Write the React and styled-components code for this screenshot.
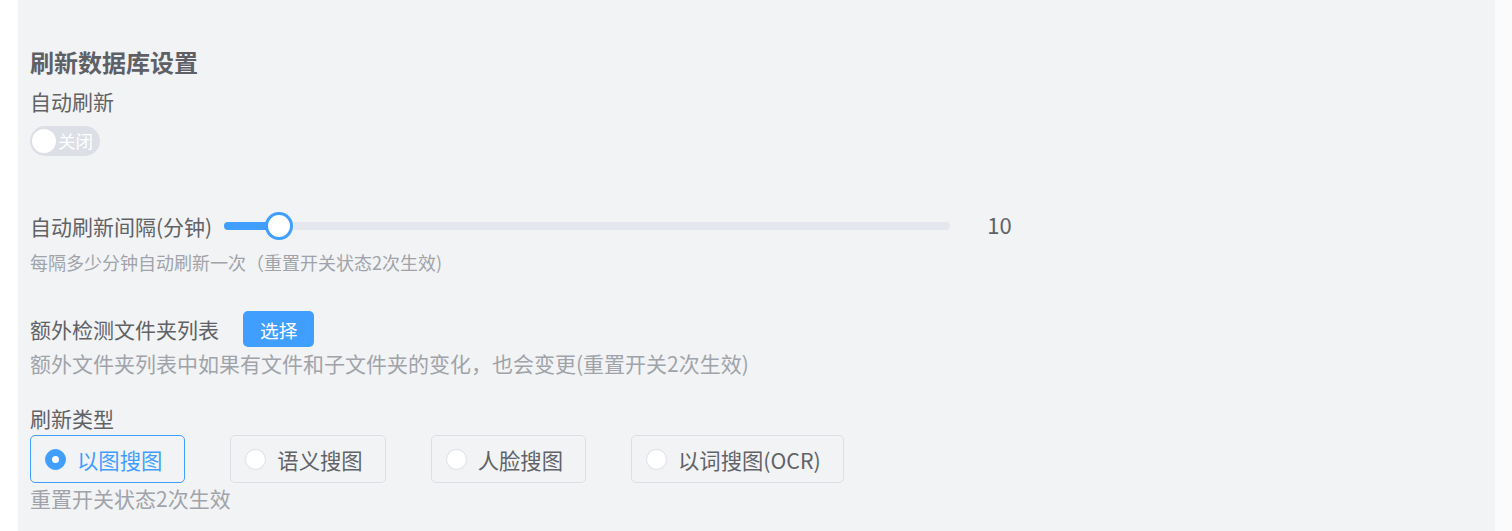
import React, { useState } from "react";
import styled, { createGlobalStyle } from "styled-components";

const GlobalStyle = createGlobalStyle`
  html, body {
    margin: 0;
    padding: 0;
    background: #ffffff;
  }
  body {
    font-family: "Noto Sans CJK SC", "Noto Sans", sans-serif;
    color: #606266;
  }
`;

const Shell = styled.div`
  display: flex;
  min-height: 100vh;
`;

const Gutter = styled.div`
  width: 18px;
  flex-shrink: 0;
  background: #ffffff;
`;

const Scrollbar = styled.div`
  width: 17px;
  flex-shrink: 0;
  background: #fbfbfb;
`;

const Panel = styled.main`
  flex: 1;
  background: #f2f3f5;
  padding: 46px 12px 0 12px;
  display: flex;
  flex-direction: column;
  align-items: flex-start;
`;

const Title = styled.h2`
  margin: 0;
  font-size: 24px;
  line-height: 32px;
  font-weight: 700;
  color: #5e6066;
`;

const Label = styled.div`
  font-size: 21px;
  line-height: ${(p) => p.$lh || 32}px;
  margin-top: ${(p) => p.$mt || 0}px;
  color: #606266;
  white-space: nowrap;
`;

const Hint = styled.div`
  font-size: ${(p) => p.$size || 21}px;
  line-height: ${(p) => p.$lh || 30}px;
  margin-top: ${(p) => p.$mt || 0}px;
  color: #a0a3a9;
  white-space: nowrap;
`;

const SwitchTrack = styled.button`
  margin-top: 9px;
  width: 70px;
  height: 30px;
  border: none;
  border-radius: 15px;
  padding: 0 2px;
  background: ${(p) => (p.$on ? "#409eff" : "#dcdfe6")};
  display: flex;
  align-items: center;
  flex-direction: ${(p) => (p.$on ? "row-reverse" : "row")};
  gap: 2px;
  cursor: pointer;
  font-family: inherit;
`;

const SwitchKnob = styled.span`
  width: 24px;
  height: 24px;
  border-radius: 50%;
  background: #ffffff;
  flex-shrink: 0;
`;

const SwitchText = styled.span`
  font-size: 17.5px;
  line-height: 24px;
  color: #ffffff;
`;

const Row = styled.div`
  display: flex;
  align-items: center;
  margin-top: ${(p) => p.$mt || 0}px;
  height: ${(p) => p.$h}px;
  gap: ${(p) => p.$gap || 0}px;
`;

const SliderRunway = styled.div`
  position: relative;
  width: 726px;
  height: 8px;
  border-radius: 4px;
  background: #e4e7ed;
  margin-left: 12px;
`;

const SliderBar = styled.div`
  height: 100%;
  border-radius: 4px;
  background: #409eff;
`;

const SliderThumb = styled.div`
  position: absolute;
  top: 50%;
  width: 28px;
  height: 28px;
  box-sizing: border-box;
  border: 3px solid #409eff;
  border-radius: 50%;
  background: #ffffff;
  transform: translate(-50%, -50%);
`;

const SliderValue = styled.span`
  margin-left: 37px;
  padding-bottom: 5px;
  font-size: 22px;
  color: #606266;
`;

const PrimaryButton = styled.button`
  height: 36px;
  padding: 0 17px;
  border: none;
  border-radius: 5px;
  background: #409eff;
  color: #ffffff;
  font-family: inherit;
  font-size: 18.67px;
  cursor: pointer;
`;

const RadioGroup = styled.div`
  display: flex;
  gap: 45px;
  margin-top: 2px;
`;

const RadioBox = styled.label`
  display: flex;
  align-items: center;
  height: 48px;
  box-sizing: border-box;
  padding: 0 22px 0 14px;
  border: 1px solid ${(p) => (p.$checked ? "#409eff" : "#dcdfe6")};
  border-radius: 5px;
  cursor: pointer;
  color: ${(p) => (p.$checked ? "#409eff" : "#606266")};
  font-size: 21.33px;
`;

const RadioDot = styled.span`
  width: 21px;
  height: 21px;
  box-sizing: border-box;
  border-radius: 50%;
  border: 1px solid ${(p) => (p.$checked ? "#409eff" : "#dcdfe6")};
  background: ${(p) => (p.$checked ? "#409eff" : "#ffffff")};
  display: flex;
  align-items: center;
  justify-content: center;
  flex-shrink: 0;
  &::after {
    content: "";
    width: 7px;
    height: 7px;
    border-radius: 50%;
    background: #ffffff;
    display: ${(p) => (p.$checked ? "block" : "none")};
  }
`;

const RadioText = styled.span`
  padding-left: 11px;
  white-space: nowrap;
`;

const types = ["以图搜图", "语义搜图", "人脸搜图", "以词搜图(OCR)"];

export default function App() {
  const [auto, setAuto] = useState(false);
  const [type, setType] = useState(0);
  const min = 1;
  const max = 120;
  const value = 10;
  const pct = ((value - min) / (max - min)) * 100;

  return (
    <>
      <GlobalStyle />
      <Shell>
        <Gutter />
        <Panel>
          <Title>刷新数据库设置</Title>
          <Label $mt={7}>自动刷新</Label>
          <SwitchTrack $on={auto} onClick={() => setAuto(!auto)}>
            <SwitchKnob />
            <SwitchText>{auto ? "开启" : "关闭"}</SwitchText>
          </SwitchTrack>

          <Row $mt={54} $h={32}>
            <Label>自动刷新间隔(分钟)</Label>
            <SliderRunway>
              <SliderBar style={{ width: `${pct}%` }} />
              <SliderThumb style={{ left: `${pct}%` }} />
            </SliderRunway>
            <SliderValue>{value}</SliderValue>
          </Row>
          <Hint $size={18} $lh={28} $mt={6}>
            每隔多少分钟自动刷新一次（重置开关状态2次生效)
          </Hint>

          <Row $mt={35} $h={36} $gap={24}>
            <Label>额外检测文件夹列表</Label>
            <PrimaryButton>选择</PrimaryButton>
          </Row>
          <Hint $mt={1}>额外文件夹列表中如果有文件和子文件夹的变化，也会变更(重置开关2次生效)</Hint>

          <Label $mt={25} $lh={30}>刷新类型</Label>
          <RadioGroup>
            {types.map((t, i) => (
              <RadioBox key={t} $checked={type === i} onClick={() => setType(i)}>
                <RadioDot $checked={type === i} />
                <RadioText>{t}</RadioText>
              </RadioBox>
            ))}
          </RadioGroup>
          <Hint>重置开关状态2次生效</Hint>
        </Panel>
        <Scrollbar />
      </Shell>
    </>
  );
}
